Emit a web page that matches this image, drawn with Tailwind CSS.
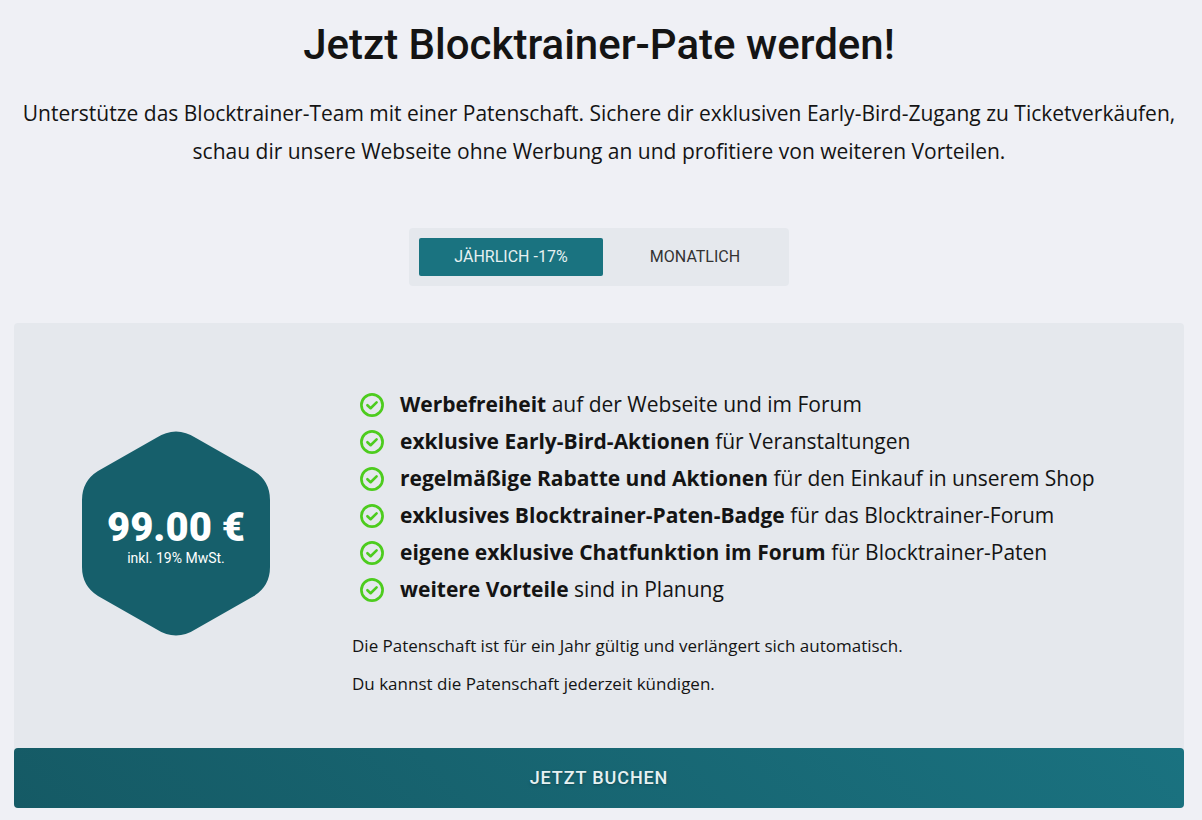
<!DOCTYPE html>
<html lang="de" class="h-full bg-[#eff0f5]">
  <head>
    <meta charset="UTF-8" />
    <meta name="viewport" content="width=device-width, initial-scale=1.0" />
    <title>Jetzt Blocktrainer-Pate werden!</title>
    <script src="https://cdn.jsdelivr.net/npm/@tailwindcss/browser@4"></script>
  </head>
  <body class="bg-[#eff0f5] font-['Open_Sans',sans-serif] text-[#141414]">
    <!-- Icons -->
    <svg class="hidden">
      <symbol id="check-circle" viewBox="0 0 24 24">
        <circle cx="12" cy="12" r="10.6" fill="none" stroke="currentColor" stroke-width="2.7" />
        <path
          d="M7.4 12.2l3.2 3 6-5.8"
          fill="none"
          stroke="currentColor"
          stroke-width="2.6"
          stroke-linecap="round"
          stroke-linejoin="round"
        />
      </symbol>
    </svg>

    <main class="pt-5 pr-[18px] pb-3 pl-[14px]">
      <!-- Header -->
      <header class="text-center">
        <h1 class="font-['Roboto',sans-serif] text-[42px] leading-[50px] font-medium">
          Jetzt Blocktrainer-Pate werden!
        </h1>
        <p class="mt-6 text-[21px] leading-[38px]">
          Unterstütze das Blocktrainer-Team mit einer Patenschaft. Sichere dir
          exklusiven Early-Bird-Zugang zu Ticketverkäufen, schau dir unsere
          Webseite ohne Werbung an und profitiere von weiteren Vorteilen.
        </p>
      </header>

      <!-- Billing interval -->
      <div
        class="mx-auto mt-[58px] flex w-fit gap-2 rounded bg-[#e5e8ed] p-[10px] font-['Roboto',sans-serif] text-base"
      >
        <button type="button" aria-pressed="true" class="h-[38px] w-46 rounded-xs bg-[#1a7380] text-[#e6f1f2]">
          JÄHRLICH -17%
        </button>
        <button type="button" aria-pressed="false" class="h-[38px] w-42 rounded-xs text-[#333]">
          MONATLICH
        </button>
      </div>

      <!-- Plan -->
      <section class="mt-[37px] rounded bg-[#e5e8ed]">
        <div class="flex items-start pt-[63px] pb-[45px]">
          <div class="mt-[45px] grid w-[324px] shrink-0 place-items-center">
            <svg class="col-start-1 row-start-1 h-[205px] w-[188px] text-[#165f6b]" viewBox="0 0 188 205" fill="currentColor">
              <path
                d="M74 7Q94 -6 114 7L172 40Q188 50 188 69V136Q188 155 172 165L114 198Q94 211 74 198L16 165Q0 155 0 136V69Q0 50 16 40Z"
              />
            </svg>
            <div class="col-start-1 row-start-1 pt-2 text-center font-['Roboto',sans-serif] text-white">
              <div class="text-[40px] leading-10 font-black">99.00 €</div>
              <div class="text-sm">inkl. 19% MwSt.</div>
            </div>
          </div>

          <div class="pr-6 pl-[14px]">
            <ul class="pl-2 text-[21px] leading-[37px]">
              <li class="flex items-center gap-4">
                <svg class="size-6 shrink-0 overflow-visible text-[#4dcc1e]"><use href="#check-circle" /></svg>
                <span><strong>Werbefreiheit</strong> auf der Webseite und im Forum</span>
              </li>
              <li class="flex items-center gap-4">
                <svg class="size-6 shrink-0 overflow-visible text-[#4dcc1e]"><use href="#check-circle" /></svg>
                <span><strong>exklusive Early-Bird-Aktionen</strong> für Veranstaltungen</span>
              </li>
              <li class="flex items-center gap-4">
                <svg class="size-6 shrink-0 overflow-visible text-[#4dcc1e]"><use href="#check-circle" /></svg>
                <span><strong>regelmäßige Rabatte und Aktionen</strong> für den Einkauf in unserem Shop</span>
              </li>
              <li class="flex items-center gap-4">
                <svg class="size-6 shrink-0 overflow-visible text-[#4dcc1e]"><use href="#check-circle" /></svg>
                <span><strong>exklusives Blocktrainer-Paten-Badge</strong> für das Blocktrainer-Forum</span>
              </li>
              <li class="flex items-center gap-4">
                <svg class="size-6 shrink-0 overflow-visible text-[#4dcc1e]"><use href="#check-circle" /></svg>
                <span><strong>eigene exklusive Chatfunktion im Forum</strong> für Blocktrainer-Paten</span>
              </li>
              <li class="flex items-center gap-4">
                <svg class="size-6 shrink-0 overflow-visible text-[#4dcc1e]"><use href="#check-circle" /></svg>
                <span><strong>weitere Vorteile</strong> sind in Planung</span>
              </li>
            </ul>
            <p class="mt-[19px] text-[17px] leading-[38px]">
              Die Patenschaft ist für ein Jahr gültig und verlängert sich automatisch.<br />
              Du kannst die Patenschaft jederzeit kündigen.
            </p>
          </div>
        </div>

        <button
          type="button"
          class="h-15 w-full rounded bg-linear-45 from-[#155a65] to-[#1a7280] font-['Roboto',sans-serif] text-lg font-medium tracking-wider text-[#e6f1f2] text-shadow-md"
        >
          JETZT BUCHEN
        </button>
      </section>
    </main>
  </body>
</html>
